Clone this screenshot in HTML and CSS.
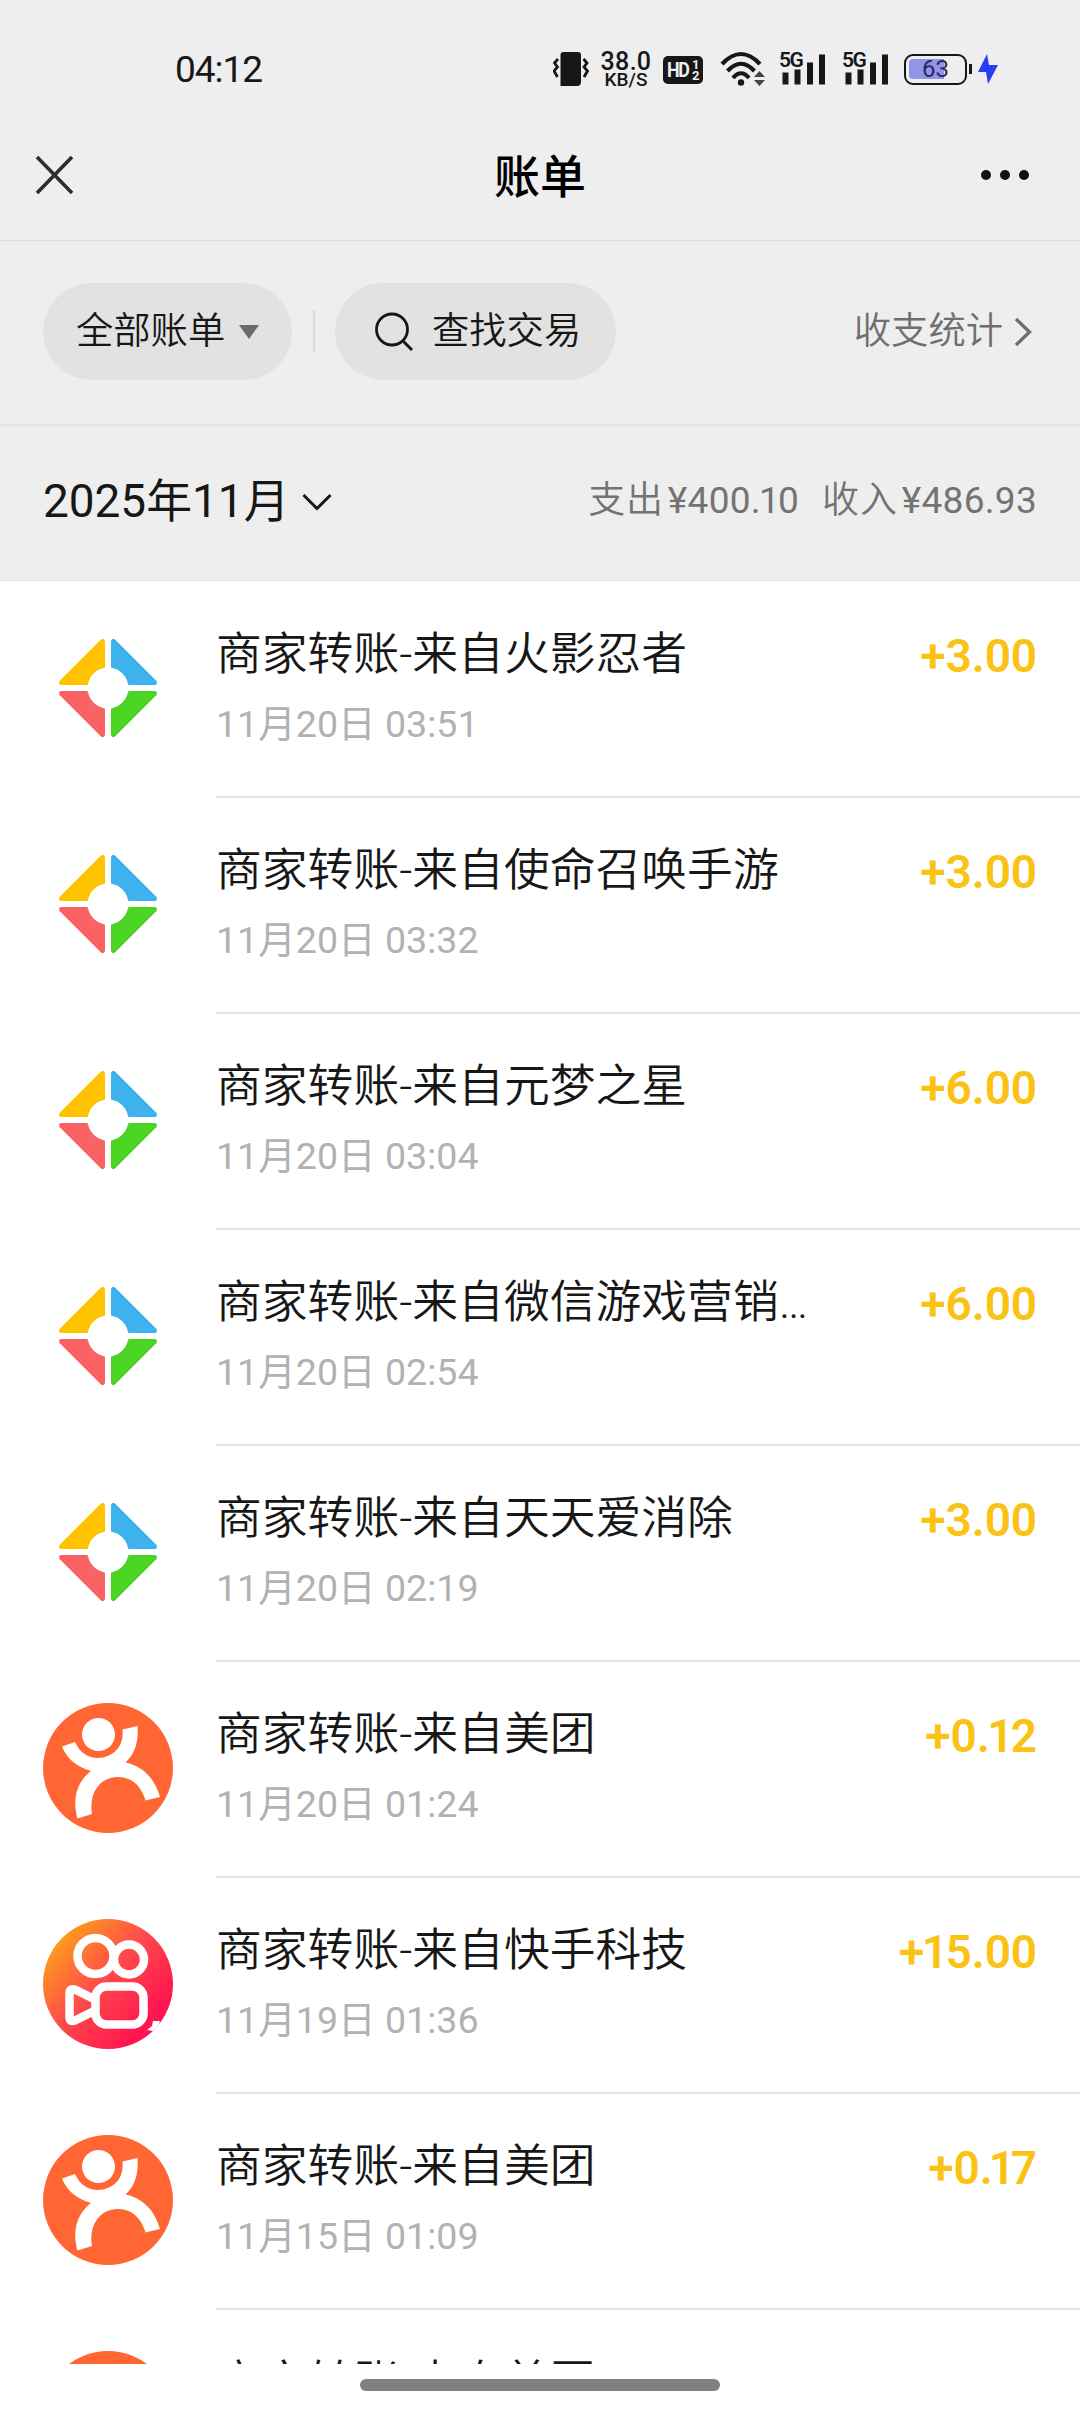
FILE: index.html
```html
<!DOCTYPE html>
<html lang="zh-CN">
<head>
<meta charset="utf-8">
<title>账单</title>
<link rel="stylesheet" href="styles.css">
</head>
<body>
<svg class="defs" aria-hidden="true">
  <defs>
    <linearGradient id="ks" x1="0.05" y1="0.2" x2="0.75" y2="0.85">
      <stop offset="0" stop-color="#ff9f1a"/><stop offset=".5" stop-color="#ff4b4b"/><stop offset="1" stop-color="#ff1550"/>
    </linearGradient>
    <clipPath id="round"><circle cx="65" cy="65" r="65"/></clipPath>
    <symbol id="game" viewBox="0 0 130 130">
      <g stroke-width="5" stroke-linejoin="round">
        <path d="M59.500 18.500V43.500A22.500 22.500 0 0 0 43.500 59.500H18.500Z" fill="#ffc300" stroke="#ffc300"/>
        <path d="M70.500 18.500V43.500A22.500 22.500 0 0 1 86.500 59.500H111.500Z" fill="#3eb2ee" stroke="#3eb2ee"/>
        <path d="M59.500 111.500V86.500A22.500 22.500 0 0 1 43.500 70.500H18.500Z" fill="#fa6363" stroke="#fa6363"/>
        <path d="M70.500 111.500V86.500A22.500 22.500 0 0 0 86.500 70.500H111.500Z" fill="#4cd424" stroke="#4cd424"/>
      </g>
      <circle cx="65" cy="65" r="20.500" fill="#fff"/>
    </symbol>
    <symbol id="meituan" viewBox="0 0 130 130">
      <circle cx="65" cy="65" r="65" fill="#ff6633"/>
      <circle cx="55.500" cy="31.500" r="16.500" fill="#fff"/>
      <path d="M19 43.500L32 39C38 52 48 56.500 60 54.500C74 51 81 41 79.500 26.500L94.500 23C96 40 91 52 82.500 59.500C100 63 112 76 117 94L102.500 97.500C98 82 88 74 75 74C57 74 45.500 90 49 111L34.500 115.500C29 95 34 79 48 68C34 64 24 56 19 43.500Z" fill="#fff"/>
    </symbol>
    <symbol id="kuaishou" viewBox="0 0 130 130">
      <g clip-path="url(#round)">
        <rect width="130" height="130" fill="url(#ks)"/>
        <g fill="none" stroke="#fff" stroke-width="8.500" stroke-linejoin="round">
          <circle cx="52.500" cy="37" r="18"/>
          <circle cx="86" cy="40.500" r="15"/>
          <rect x="52.500" y="67.500" width="48" height="38" rx="11"/>
          <path d="M51 80L32 70.500Q26.500 69 26.500 74.500V98Q26.500 103.500 32 101.500L51 92"/>
        </g>
        <path d="M110 102L117 102L116 106L122 110L112 120L110 112L104 111L109 107Z" fill="#fff"/>
      </g>
    </symbol>
  </defs>
</svg>

<main class="screen">
  <header class="status">
    <div class="clock">04:12</div>
    <svg class="vibrate" viewBox="0 0 36 36" width="36" height="36"><path d="M7.500 35V4Q7.500 1 10.500 1H25Q28 1 28 4V31Q28 35 24 35Z" fill="#171717"/><path d="M5 8L1.500 12L4.500 16L1 20L4.500 26M30.500 8L34 12L31 16L34.500 20L31 26" fill="none" stroke="#171717" stroke-width="2.800"/></svg>
    <div class="speed"><span class="rate">38.0</span><span class="unit">KB/S</span></div>
    <div class="hd"><span class="hd-text">HD</span><span class="sims"><i>1</i><i>2</i></span></div>
    <svg class="wifi" viewBox="0 0 46 36" width="46" height="36"><g fill="none" stroke="#171717" stroke-width="4.200"><path d="M2 13Q21 -7 40 13"/><path d="M7.500 20Q21 5.500 34.500 20"/><path d="M13 27Q21 17.500 29 27"/></g><circle cx="21" cy="31.500" r="3.200" fill="#171717"/><path d="M34 26L39.500 20L45 26ZM34 29H45L39.500 35Z" fill="#444"/></svg>
    <div class="cell"><span class="net">5G</span><svg viewBox="0 0 48 34" width="48" height="34"><path d="M3.500 21.500h6v12h-6zM15.500 18.500h6v15h-6zM28 11.500h6v22h-6zM40 3.500h6v30h-6z" fill="#171717"/></svg></div>
    <div class="cell second"><span class="net">5G</span><svg viewBox="0 0 48 34" width="48" height="34"><path d="M3.500 21.500h6v12h-6zM15.500 18.500h6v15h-6zM28 11.500h6v22h-6zM40 3.500h6v30h-6z" fill="#171717"/></svg></div>
    <div class="battery"><span>63</span></div>
    <svg class="bolt" viewBox="0 0 20 32" width="20" height="32"><path d="M9 1L0 19H8L10 31L20 12H11Z" fill="#2b3df2"/></svg>
  </header>

  <nav class="titlebar">
    <svg class="close" viewBox="0 0 40 40" width="40" height="40"><path d="M2 2L37 38M37 2L2 38" stroke="#2d2d2d" stroke-width="3.600"/></svg>
    <h1>账单</h1>
    <svg class="more" viewBox="0 0 50 12" width="50" height="12"><g fill="#111"><circle cx="6" cy="6" r="5"/><circle cx="25" cy="6" r="5"/><circle cx="44" cy="6" r="5"/></g></svg>
  </nav>

  <section class="filters">
    <div class="pill type"><span>全部账单</span><svg viewBox="0 0 20 14" width="20" height="14"><path d="M0 0H20L10 14Z" fill="#6b6b6b"/></svg></div>
    <div class="rule"></div>
    <div class="pill search"><svg viewBox="0 0 40 40" width="40" height="40"><circle cx="18" cy="17.500" r="15.500" fill="none" stroke="#171717" stroke-width="2.800"/><path d="M28.500 28.500L38 38" stroke="#171717" stroke-width="3"/></svg><span>查找交易</span></div>
    <div class="stats"><span>收支统计</span><svg viewBox="0 0 18 30" width="18" height="30"><path d="M2 2L15.500 15L2 28" fill="none" stroke="#6f6f6f" stroke-width="3.400"/></svg></div>
  </section>

  <section class="summary">
    <div class="month"><span>2025年11月</span><svg viewBox="0 0 30 18" width="30" height="18"><path d="M1.500 2L15 15.500L28.500 2" fill="none" stroke="#171717" stroke-width="3"/></svg></div>
    <div class="totals"><span>支出<b>¥400.<i>1</i>0</b></span><span>收入<b>¥486.93</b></span></div>
  </section>

  <section class="list">
    <article class="row"><svg class="logo"><use href="#game"/></svg><div class="body"><div class="info"><p class="name">商家转账-来自火影忍者</p><p class="date">11月20日 03:51</p></div><p class="amount">+3.00</p></div></article>
    <article class="row"><svg class="logo"><use href="#game"/></svg><div class="body"><div class="info"><p class="name">商家转账-来自使命召唤手游</p><p class="date">11月20日 03:32</p></div><p class="amount">+3.00</p></div></article>
    <article class="row"><svg class="logo"><use href="#game"/></svg><div class="body"><div class="info"><p class="name">商家转账-来自元梦之星</p><p class="date">11月20日 03:04</p></div><p class="amount">+6.00</p></div></article>
    <article class="row"><svg class="logo"><use href="#game"/></svg><div class="body"><div class="info"><p class="name">商家转账-来自微信游戏营销…</p><p class="date">11月20日 02:54</p></div><p class="amount">+6.00</p></div></article>
    <article class="row"><svg class="logo"><use href="#game"/></svg><div class="body"><div class="info"><p class="name">商家转账-来自天天爱消除</p><p class="date">11月20日 02:19</p></div><p class="amount">+3.00</p></div></article>
    <article class="row"><svg class="logo"><use href="#meituan"/></svg><div class="body"><div class="info"><p class="name">商家转账-来自美团</p><p class="date">11月20日 01:24</p></div><p class="amount">+0.<i>1</i>2</p></div></article>
    <article class="row"><svg class="logo"><use href="#kuaishou"/></svg><div class="body"><div class="info"><p class="name">商家转账-来自快手科技</p><p class="date">11月19日 01:36</p></div><p class="amount">+<i>1</i>5.00</p></div></article>
    <article class="row"><svg class="logo"><use href="#meituan"/></svg><div class="body"><div class="info"><p class="name">商家转账-来自美团</p><p class="date">11月15日 01:09</p></div><p class="amount">+0.<i class="tight">1</i>7</p></div></article>
    <article class="row"><svg class="logo"><use href="#meituan"/></svg><div class="body"><div class="info"><p class="name">商家转账-来自美团</p></div></div></article>
  </section>
  <footer class="gesture"><div class="handle"></div></footer>
</main>
</body>
</html>
```
FILE: styles.css
```css
* { box-sizing: border-box; margin: 0; padding: 0; }
body { width: 1080px; height: 2412px; overflow: hidden; background: #fff; color: #171717; font-family: Roboto, "Noto Sans CJK SC", sans-serif; }
svg { display: block; flex: none; }
i { font-style: normal; }
.defs { position: absolute; width: 0; height: 0; }
.screen { display: flex; flex-direction: column; height: 2412px; }

.status { display: flex; align-items: flex-start; height: 110px; padding-top: 51px; background: #eee; flex: none; white-space: nowrap; }
.clock { width: 378px; margin-left: 175px; font-size: 37px; line-height: 37px; letter-spacing: -1px; }
.speed { display: flex; flex-direction: column; align-items: center; width: 50px; margin-left: 12px; font-weight: 500; }
.rate { font-size: 25px; line-height: 21px; height: 20px; letter-spacing: .3px; }
.unit { font-size: 19px; line-height: 18px; }
.hd { display: flex; width: 40px; height: 28px; margin: 5px 0 0 12px; border-radius: 5px; background: #171717; color: #eee; padding-left: 4px; }
.hd-text { width: 23px; font: 700 21px/28px Roboto, sans-serif; letter-spacing: -1.500px; transform: scaleX(.85); transform-origin: left; }
.sims { display: flex; flex-direction: column; padding: 3px 0 0 2px; }
.sims i { font: 700 13px/11px Roboto, sans-serif; }
.wifi { margin-left: 17px; }
.cell { position: relative; width: 48px; margin-left: 13px; }
.cell.second { margin-left: 15px; }
.net { position: absolute; left: 0; top: 0; font-size: 21px; line-height: 18px; font-weight: 600; letter-spacing: -1.500px; }
.battery { position: relative; width: 63px; height: 31px; margin: 3px 0 0 14px; border: 2.500px solid #171717; border-radius: 9px; }
.battery::before { content: ""; position: absolute; left: 3px; top: 3px; width: 35px; height: 20px; border-radius: 4px 0 0 4px; background: #9294ec; }
.battery::after { content: ""; position: absolute; right: -7px; top: 8px; width: 3px; height: 10px; background: #171717; }
.battery span { position: relative; display: block; text-align: center; font-size: 24px; line-height: 27px; color: #2a2a55; }
.bolt { margin: 2px 0 0 11px; }

.titlebar { display: flex; align-items: center; justify-content: space-between; height: 131px; padding: 0 50px 0 35px; background: #eee; border-bottom: 1px solid #dcdcdc; flex: none; }
.titlebar h1 { font-size: 46px; font-weight: 500; line-height: 60px; color: #000; margin: 4px 0 0 25px; }

.filters { display: flex; align-items: center; height: 185px; padding: 0 48px 2px 43px; background: #eee; border-bottom: 2px solid #e5e5e5; flex: none; font-size: 37.300px; font-weight: 350; }
.pill { display: flex; align-items: center; height: 97px; border-radius: 49px; background: #e2e2e2; }
.pill span, .stats span { line-height: 50px; position: relative; top: -1px; }
.type { width: 249px; padding-left: 33px; gap: 14px; }
.rule { width: 2px; height: 43px; margin: 0 20px 0 21px; background: #dadada; }
.search { width: 281px; padding-left: 39px; gap: 18px; }
.stats { display: flex; align-items: center; gap: 11px; margin-left: auto; color: #6f6f6f; }

.summary { display: flex; align-items: center; justify-content: space-between; height: 155px; padding: 0 43px 5px; background: #eee; border-bottom: 1px solid #e0e0e0; flex: none; }
.month { display: flex; align-items: center; gap: 12px; font-size: 45.900px; line-height: 60px; }
.month svg { position: relative; top: 1px; }
.totals { display: flex; gap: 23px; font-size: 37px; line-height: 50px; color: #737373; font-weight: 350; letter-spacing: .8px; }
.totals b { font-weight: 400; letter-spacing: .3px; margin-left: 4px; }
.totals i { margin: 0 -2px; }

.list { flex: 1; overflow: hidden; padding-top: 1px; }
.row { display: flex; height: 216px; padding-left: 43px; }
.logo { width: 130px; height: 130px; margin-top: 41px; }
.body { display: flex; justify-content: space-between; flex: 1; margin-left: 43px; padding: 44px 43px 0 0; border-bottom: 2px solid #e5e5e5; }
.name { font-size: 45.800px; line-height: 58px; white-space: nowrap; font-weight: 350; }
.date { margin-top: 15px; font-size: 37.600px; line-height: 50px; color: #b2b2b2; }
.amount { font-size: 46px; line-height: 60px; font-weight: 600; letter-spacing: -.1px; color: #fac213; }
.amount i { margin: 0 -2.500px; }
.amount .tight { margin: 0 -4px; }
.gesture { display: flex; justify-content: center; height: 48px; padding-top: 15px; background: #fff; flex: none; }
.handle { width: 360px; height: 12px; border-radius: 6px; background: #808080; }
```
